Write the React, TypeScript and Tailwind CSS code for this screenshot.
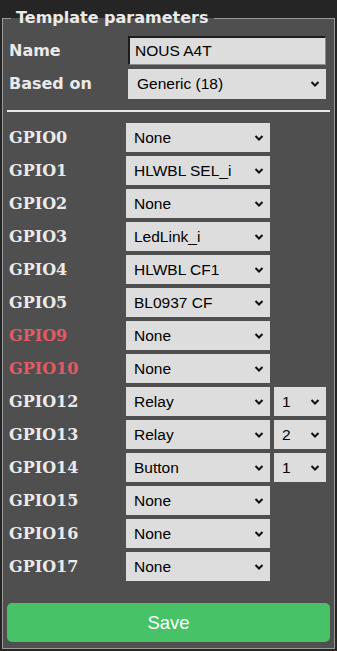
import React from "react";

const gpios = [
  { name: "GPIO0", value: "None" },
  { name: "GPIO1", value: "HLWBL SEL_i" },
  { name: "GPIO2", value: "None" },
  { name: "GPIO3", value: "LedLink_i" },
  { name: "GPIO4", value: "HLWBL CF1" },
  { name: "GPIO5", value: "BL0937 CF" },
  { name: "GPIO9", value: "None", warn: true },
  { name: "GPIO10", value: "None", warn: true },
  { name: "GPIO12", value: "Relay", index: "1" },
  { name: "GPIO13", value: "Relay", index: "2" },
  { name: "GPIO14", value: "Button", index: "1" },
  { name: "GPIO15", value: "None" },
  { name: "GPIO16", value: "None" },
  { name: "GPIO17", value: "None" },
];

const Chevron = () => (
  <svg
    width="10"
    height="7"
    viewBox="0 0 10 7"
    className="pointer-events-none absolute right-[6px] top-1/2 -translate-y-1/2"
  >
    <path d="M1.5 1.5l3.5 3.5 3.5-3.5" fill="none" stroke="#111" strokeWidth="2" />
  </svg>
);

const Select: React.FC<{ value: string; className?: string; pad?: string }> = ({
  value,
  className = "",
  pad = "pl-[8px]",
}) => (
  <div className={`relative ${className}`}>
    <select
      className={`h-full w-full appearance-none bg-[#dddddd] ${pad} pr-5 text-[15.5px] text-black outline-none [font-family:'Liberation_Sans',Arial,sans-serif]`}
    >
      <option>{value}</option>
    </select>
    <Chevron />
  </div>
);

export default function App() {
  return (
    <div className="min-h-[651px] w-[337px] bg-[#252525] pt-[8px]">
      <fieldset className="mx-[2px] border border-[#9a9a9a] bg-[#4f4f4f] px-[4px] pb-[6px] pt-[8px]">
        <legend className="ml-[4px] px-[5px] text-[16px] font-bold leading-[20px] text-[#eaeaea] [font-family:'DejaVu_Sans',Verdana,sans-serif]">
          Template parameters
        </legend>

        <div className="flex flex-col gap-[4px] [font-family:'DejaVu_Sans',Verdana,sans-serif]">
          <div className="flex h-[29px] items-center">
            <span className="w-[121px] pl-[2px] text-[16px] font-bold text-[#eaeaea]">Name</span>
            <input
              defaultValue="NOUS A4T"
              className="h-full w-[198px] border-l-2 border-t-2 border-b border-r border-l-[#1c1c1c] border-t-[#1c1c1c] border-b-[#8a8a8a] border-r-[#8a8a8a] bg-[#dddddd] pl-[5px] text-[15.5px] text-black outline-none [font-family:'Liberation_Sans',Arial,sans-serif]"
            />
          </div>
          <div className="flex h-[30px] items-center">
            <span className="w-[121px] pl-[2px] text-[16px] font-bold text-[#eaeaea]">Based on</span>
            <Select value="Generic (18)" className="h-full w-[198px]" pad="pl-[9px]" />
          </div>
        </div>

        <div className="mt-[11px] h-[2px] bg-[#e6e6e6]" />

        <div className="mt-[11px] flex flex-col gap-[4px]">
          {gpios.map((g) => (
            <div key={g.name} className="flex h-[29px] items-center">
              <span
                className={`w-[119px] pl-[2px] text-[16px] font-bold [font-family:'DejaVu_Serif',Georgia,serif] ${
                  g.warn ? "text-[#e45a64]" : "text-[#eaeaea]"
                }`}
              >
                {g.name}
              </span>
              <Select value={g.value} className="h-full w-[144px]" />
              {g.index && <Select value={g.index} className="ml-[4px] h-full w-[52px]" />}
            </div>
          ))}
        </div>

        <button className="mt-[22px] h-[39px] w-full rounded-[5px] bg-[#47c266] text-[18.5px] text-white [font-family:'Liberation_Sans',Arial,sans-serif]">
          Save
        </button>
      </fieldset>
    </div>
  );
}
